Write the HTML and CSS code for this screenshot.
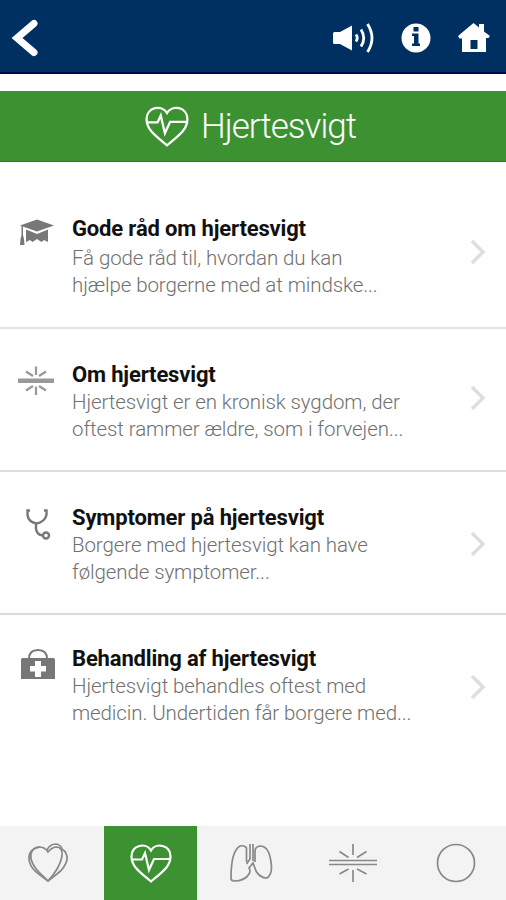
FILE: index.html
```html
<!DOCTYPE html>
<html lang="da">
<head>
    <meta charset="UTF-8">
    <meta name="viewport" content="width=device-width, initial-scale=1.0">
    <title>Hjertesvigt</title>
    <link rel="stylesheet" href="styles.css">
</head>
<body>
    <header class="topbar">
        <a class="back" href="#" aria-label="Tilbage">
            <svg width="30" height="38" viewBox="0 0 30 38"><path d="M24 4.500 7 19l17 14.500" fill="none" stroke="#fff" stroke-width="7" stroke-linecap="round"/></svg>
        </a>
        <nav class="tools">
            <svg width="42" height="30" viewBox="0 0 42 30">
                <path d="M1 10.500q0-1.500 1.500-1.500H8L20 2.500v25L8 21H2.500Q1 21 1 19.500z" fill="#fff"/>
                <path d="M24 11.500q2.500 3.500 0 7M29 6.500q5.500 8.500 0 17M35.500 1q9 14 0 28" fill="none" stroke="#fff" stroke-width="2.800"/>
            </svg>
            <svg width="30" height="30" viewBox="0 0 30 30">
                <circle cx="15" cy="15" r="14.500" fill="#fff"/>
                <path d="M12.500 4h5v4.500h-5zM11 10.500h6.500v10H19V23h-8v-2.500h2V13h-2z" fill="#003061"/>
            </svg>
            <svg width="32" height="30" viewBox="0 0 32 30">
                <path d="M0 13 15.500 0 21 4.500V1h5v7.500l6 4.500-1.500 2H28V29H4V15.500H1.500zM12.500 17v9h7v-9z" fill="#fff" fill-rule="evenodd"/>
            </svg>
        </nav>
    </header>

    <div class="title-bar">
        <svg class="title-icon" width="46" height="44" viewBox="0 0 44 42">
            <use href="#pulse-heart"/>
        </svg>
        <h1>Hjertesvigt</h1>
    </div>

    <main>
        <ul class="topics">
            <li class="topic topic-1">
                <svg class="topic-icon" width="36" height="32" viewBox="0 0 36 32">
                    <path d="M2 6.500 19 .5l17 6-17 6z"/>
                    <path d="M8 10.500l11 4.500 11-4.500V23l-4-2-2.500 2-4.500-3-4.500 3-2.500-2L8 23zM3.500 7H5v9l1 4 .5 6H2l.5-6 1-4z"/>
                </svg>
                <div class="topic-text">
                    <h2>Gode råd om hjertesvigt</h2>
                    <p>Få gode råd til, hvordan du kan<br>hjælpe borgerne med at mindske...</p>
                </div>
                <svg class="chevron" width="20" height="28" viewBox="0 0 20 28"><use href="#chevron"/></svg>
            </li>
            <li class="topic topic-2">
                <svg class="topic-icon" width="36" height="32" viewBox="0 0 36 32">
                    <path d="M0 13.500h36v4.500H0z" fill="#999"/>
                    <path d="M18 1.500V10M18 21.500V30M8 6.500l7 4.500M28 6.500l-7 4.500M8 25.500l7-4.500M28 25.500l-7-4.500" fill="none" stroke="#999" stroke-width="2.200"/>
                </svg>
                <div class="topic-text">
                    <h2>Om hjertesvigt</h2>
                    <p>Hjertesvigt er en kronisk sygdom, der<br>oftest rammer ældre, som i forvejen...</p>
                </div>
                <svg class="chevron" width="20" height="28" viewBox="0 0 20 28"><use href="#chevron"/></svg>
            </li>
            <li class="topic topic-3">
                <svg class="topic-icon" width="36" height="32" viewBox="0 0 36 32">
                    <g fill="none" stroke="#777" stroke-width="2.400">
                        <path d="M12 2.500H9.500V7q1 7 9 8.500 8-1.500 10-8.500V2.500H26M18 15.500V21q1 6 7 6.500"/>
                        <circle cx="28" cy="27.500" r="3"/>
                    </g>
                </svg>
                <div class="topic-text">
                    <h2>Symptomer på hjertesvigt</h2>
                    <p>Borgere med hjertesvigt kan have<br>følgende symptomer...</p>
                </div>
                <svg class="chevron" width="20" height="28" viewBox="0 0 20 28"><use href="#chevron"/></svg>
            </li>
            <li class="topic topic-4">
                <svg class="topic-icon" width="36" height="32" viewBox="0 0 36 32">
                    <path d="M11 10q0-9 9-9t9 9" fill="none" stroke="#777" stroke-width="2"/>
                    <path d="M4.500 9h31q1.500 0 1.500 1.500V30H3V10.500q0-1.500 1.500-1.500zM17 12v5h-5v5.500h5V28h6v-5.500h5V17h-5v-5z" fill-rule="evenodd"/>
                </svg>
                <div class="topic-text">
                    <h2>Behandling af hjertesvigt</h2>
                    <p>Hjertesvigt behandles oftest med<br>medicin. Undertiden får borgere med...</p>
                </div>
                <svg class="chevron" width="20" height="28" viewBox="0 0 20 28"><use href="#chevron"/></svg>
            </li>
        </ul>
    </main>

    <footer class="tabs">
        <a class="tab tab-first" href="#">
            <svg width="42" height="42" viewBox="0 0 42 42">
                <path d="M21 39C14 32 6 26 4 17 3 9 7 5 12 5q6 0 9 5 4-5 9-5 6 1 5 9-2 12-14 25z"/>
                <path d="M21 39C10 31 2 26 2 16 2 9 6 6 13 5"/>
                <path d="M20 8q3-6 9-6 5 1 6 5 6 4 5 11-2 8-10 14l-9 7"/>
            </svg>
        </a>
        <a class="tab active" href="#">
            <svg width="44" height="42" viewBox="0 0 44 42"><use href="#pulse-heart"/></svg>
        </a>
        <a class="tab" href="#">
            <svg width="44" height="42" viewBox="0 0 44 42">
                <path d="M17.500 20V6Q16 3 11 4 2 9 2 36q0 3 3 3 11 0 15-7 2-3 0-6l4-5 3 8q4 7 11 7 6-4 4-16Q40 4 31 4q-5 1-5 5v11M21 2v15l-3.500 5M24 2v17"/>
            </svg>
        </a>
        <a class="tab" href="#">
            <svg width="48" height="42" viewBox="0 0 48 42">
                <path d="M0 18.500h48M0 22.500h48M24 2v11M24 28v12M10.500 9.500l9 6M37.500 9.500l-9.500 6M10.500 32l9-5M37.500 32l-9.500-5"/>
            </svg>
        </a>
        <a class="tab tab-last" href="#">
            <svg width="42" height="42" viewBox="0 0 42 42"><circle cx="21" cy="21" r="18.500"/></svg>
        </a>
    </footer>

    <svg class="defs" width="0" height="0">
        <symbol id="pulse-heart" viewBox="0 0 44 42">
            <path d="M22 39.500C12 31 2.500 25 2.500 14.500 2.500 3 17 0 22 8.500 27 0 41.500 3 41.500 14.500 41.500 25 32 31 22 39.500zM2.500 17.500H13L16 11l4 17 5-11h16" fill="none" stroke="#fff" stroke-width="2.200"/>
        </symbol>
        <symbol id="chevron" viewBox="0 0 20 28">
            <path d="M4 3l11 11L4 25" fill="none" stroke="#dedede" stroke-width="3.500"/>
        </symbol>
    </svg>
</body>
</html>
```
FILE: styles.css
```css
body, h1, h2, p, ul, li {
    margin: 0;
    padding: 0;
}

body {
    width: 506px;
    height: 900px;
    display: flex;
    flex-direction: column;
    overflow: hidden;
    background-color: white;
    font-family: Roboto, sans-serif;
}

svg {
    display: block;
}

.topbar {
    height: 72px;
    display: flex;
    align-items: center;
    justify-content: space-between;
    padding: 3px 16px 0 10px;
    box-sizing: border-box;
    background-color: #003061;
    box-shadow: 0 2px #00054f;
}

.tools {
    display: flex;
    align-items: center;
    gap: 27px;
}

.title-bar {
    height: 70px;
    margin-top: 19px;
    display: flex;
    align-items: center;
    justify-content: center;
    gap: 11px;
    padding-right: 6px;
    box-sizing: border-box;
    background-color: #3c9231;
    box-shadow: 0 1px #168313;
}

.title-bar h1 {
    font-size: 35px;
    font-weight: 300;
    letter-spacing: -1px;
    color: white;
}

main {
    flex: 1;
    padding-top: 1px;
}

.topics {
    list-style: none;
}

.topic {
    box-sizing: border-box;
    display: flex;
    padding-left: 18px;
    border-bottom: 2px solid #e3d9dc;
}

.topic-1 {
    height: 167px;
    padding-top: 53px;
    border-color: #e2e2e2;
}

.topic-2 {
    height: 143px;
    padding-top: 32px;
}

.topic-3 {
    height: 143px;
    padding-top: 32px;
}

.topic-4 {
    padding-top: 30px;
    border-bottom: none;
}

.topic-icon {
    width: 36px;
    flex: none;
    fill: #777;
    margin-top: 4px;
    overflow: visible;
}

.topic-text {
    width: 378px;
    margin-left: 18px;
}

.topic h2 {
    font-size: 22px;
    line-height: 28px;
    font-weight: 700;
    letter-spacing: -0.16px;
    color: #111;
    white-space: nowrap;
}

.topic p {
    font-size: 20.5px;
    line-height: 27px;
    font-weight: 300;
    letter-spacing: -0.1px;
    color: #707070;
    white-space: nowrap;
}

.topic-1 p {
    margin-top: 2px;
}

.chevron {
    margin: 23px 0 0 18px;
}

.topic-3 .chevron {
    margin-top: 26px;
}

.topic-4 .chevron {
    margin-top: 28px;
}

.tabs {
    height: 74px;
    display: grid;
    grid-template-columns: 104px 93px 108px 96px 105px;
    background-color: #f3f3f3;
}

.tab {
    display: flex;
    align-items: center;
    justify-content: center;
}

.tab-first {
    padding-right: 8px;
}

.tab-last {
    padding-left: 5px;
}

.tab.active {
    background-color: #3c9231;
}

.tab svg {
    fill: none;
    stroke: #888;
    stroke-width: 1.7;
}

.defs {
    position: absolute;
}
```
